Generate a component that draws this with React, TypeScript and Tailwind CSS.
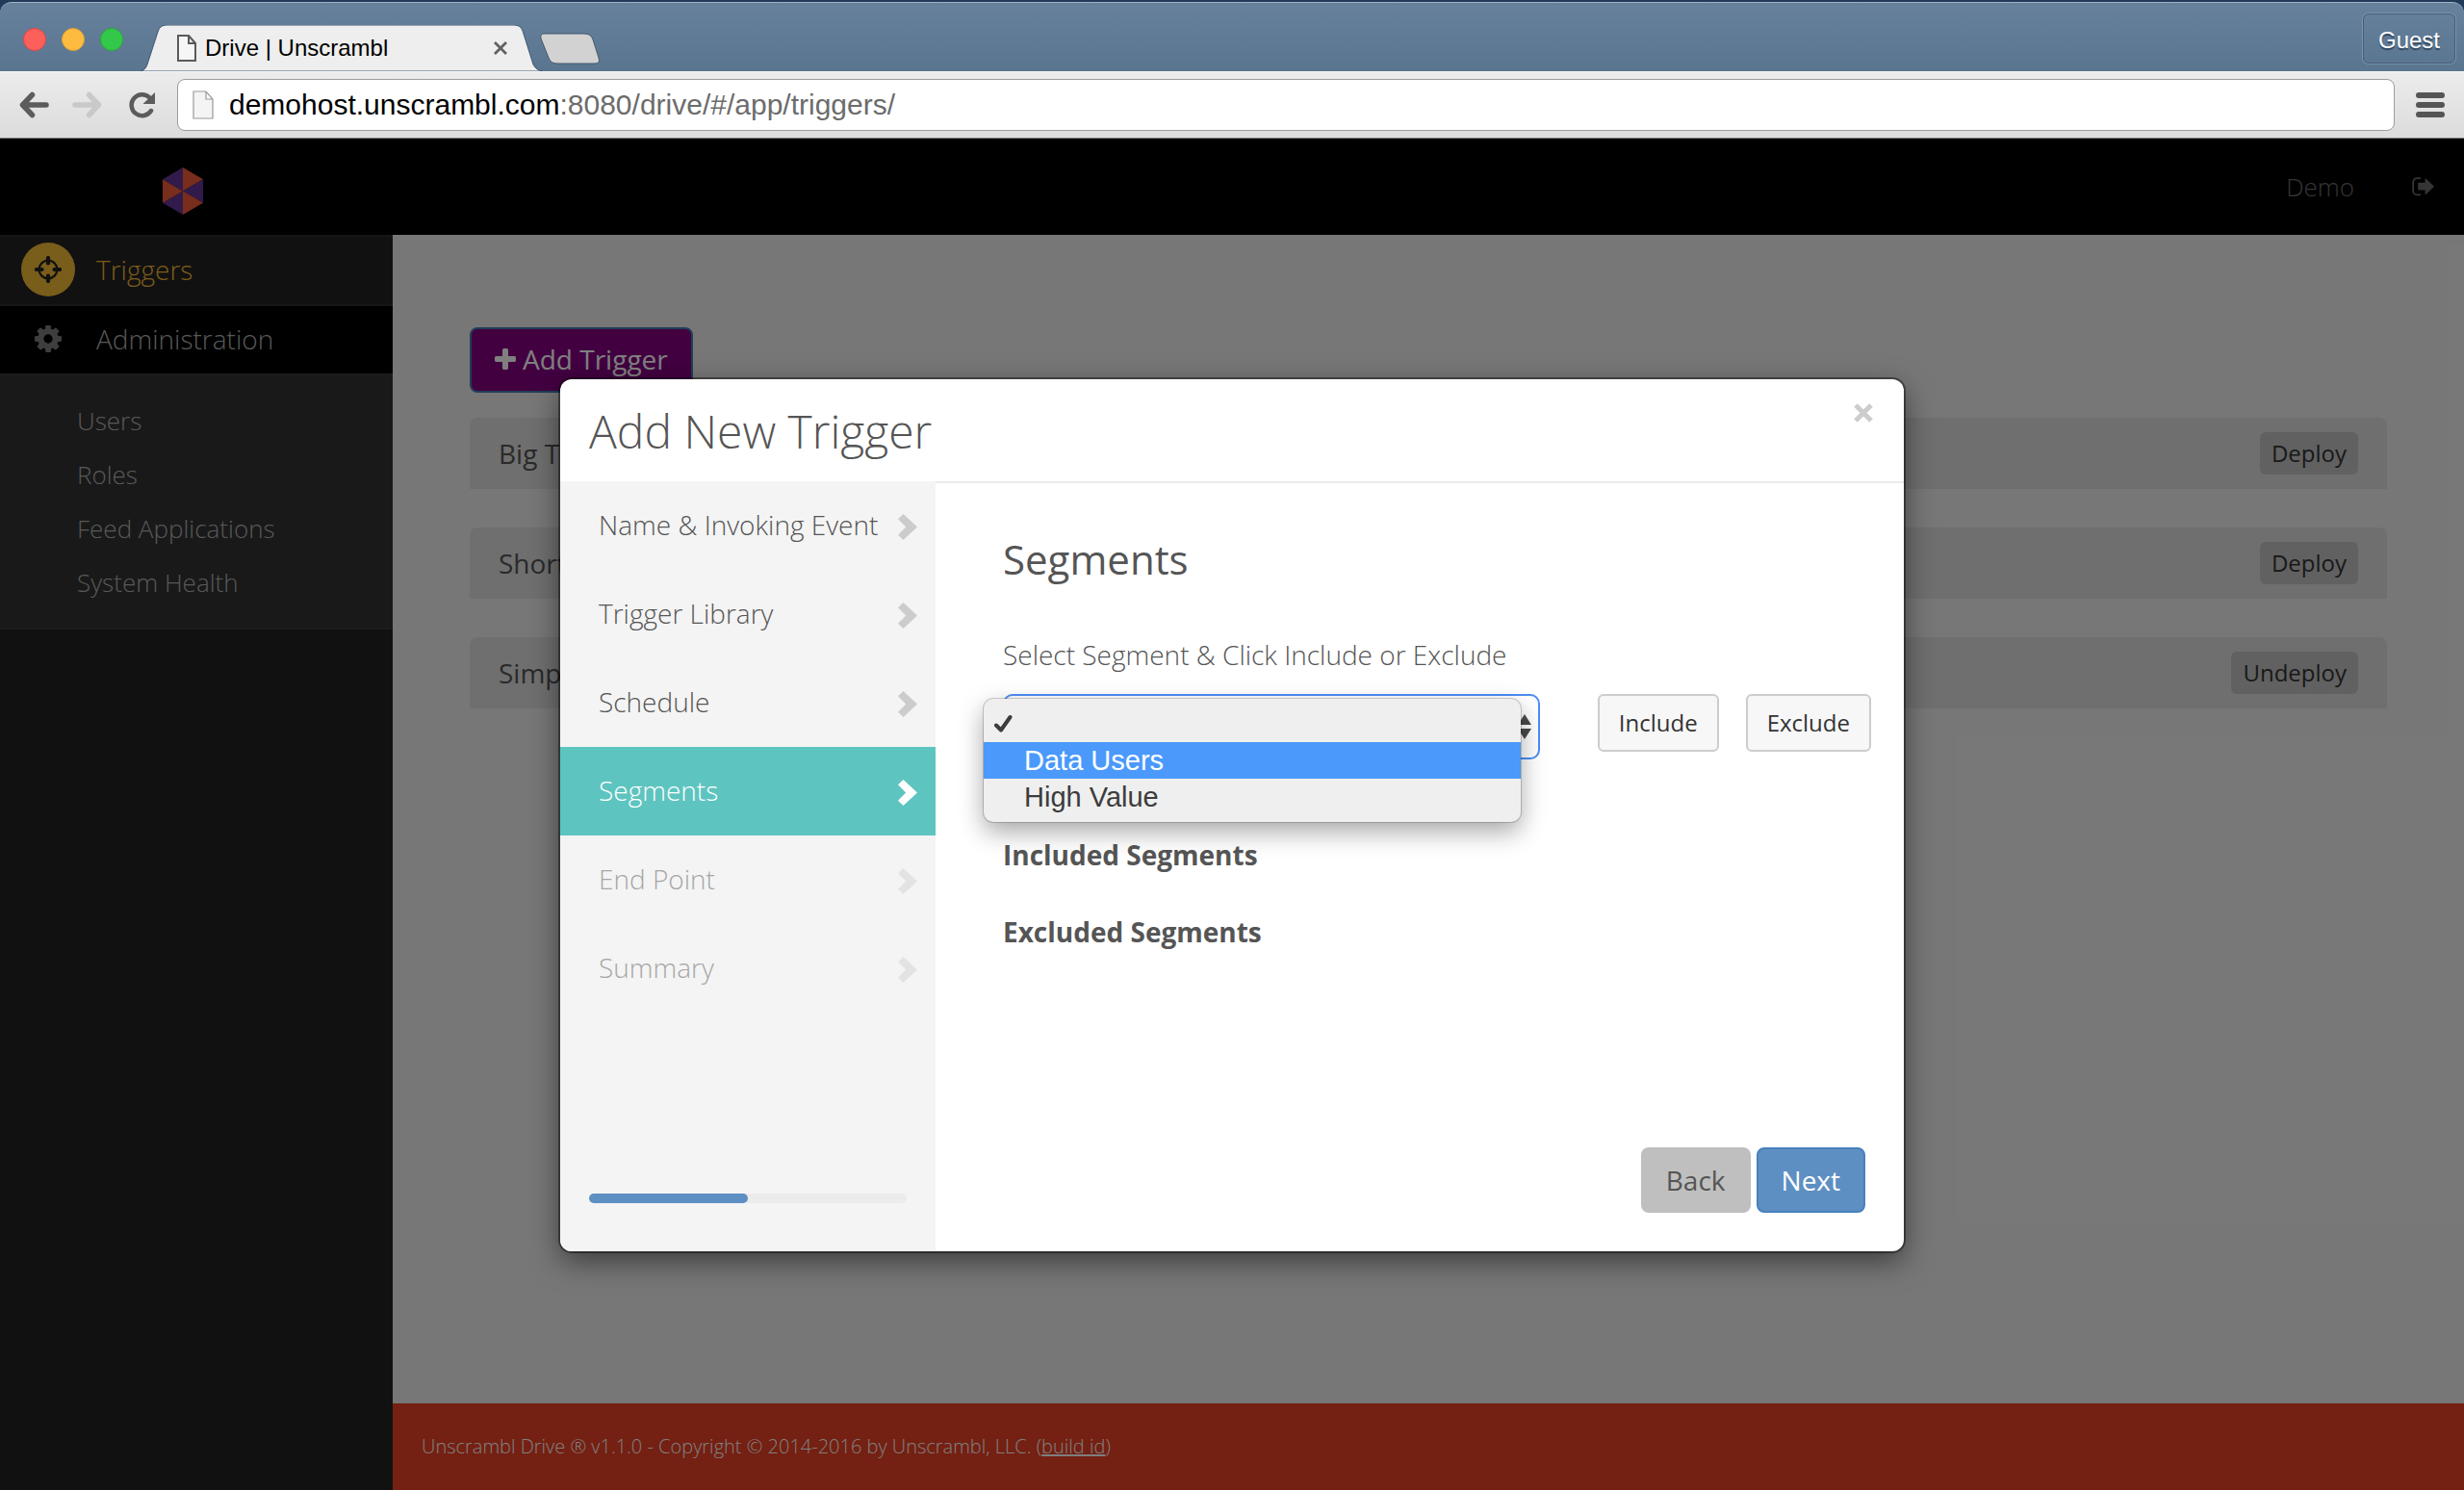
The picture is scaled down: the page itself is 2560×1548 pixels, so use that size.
import { useState } from 'react';
import clsx from 'clsx';

const steps = [
  { label: 'Name & Invoking Event', state: 'done' },
  { label: 'Trigger Library', state: 'done' },
  { label: 'Schedule', state: 'done' },
  { label: 'Segments', state: 'active' },
  { label: 'End Point', state: 'disabled' },
  { label: 'Summary', state: 'disabled' },
];

const triggers = [
  { name: 'Big T', action: 'Deploy' },
  { name: 'Short', action: 'Deploy' },
  { name: 'Simple', action: 'Undeploy' },
];

const adminLinks = ['Users', 'Roles', 'Feed Applications', 'System Health'];
const segmentOptions = ['', 'Data Users', 'High Value'];

const PlusIcon = () => (
  <svg viewBox="192 192 1408 1408" className="w-[22px] h-[22px]" fill="currentColor">
    <path d="M1600 800v192q0 40-28 68t-68 28h-416v416q0 40-28 68t-68 28h-192q-40 0-68-28t-28-68v-416h-416q-40 0-68-28t-28-68v-192q0-40 28-68t68-28h416v-416q0-40 28-68t68-28h192q40 0 68 28t28 68v416h416q40 0 68 28t28 68z" />
  </svg>
);

const CogIcon = () => (
  <svg viewBox="128 128 1536 1536" className="w-7 h-7" fill="currentColor">
    <path d="M1152 896q0-106-75-181t-181-75-181 75-75 181 75 181 181 75 181-75 75-181zm512-109v222q0 12-8 23t-20 13l-185 28q-19 54-39 91 35 50 107 138 10 12 10 25t-9 23q-27 37-99 108t-94 71q-12 0-26-9l-138-108q-44 23-91 38-16 136-29 186-7 28-36 28h-222q-14 0-24.5-8.5t-11.5-21.5l-28-184q-49-16-90-37l-141 107q-10 9-25 9-14 0-25-11-126-114-165-168-7-10-7-23 0-12 8-23 15-21 51-66.5t54-70.5q-27-50-41-99l-183-27q-13-2-21-12.5t-8-23.5v-222q0-12 8-23t19-13l186-28q14-46 39-92-40-57-107-138-10-12-10-24 0-10 9-23 26-36 98.5-107.5t94.5-71.5q13 0 26 10l138 107q44-23 91-38 16-136 29-186 7-28 36-28h222q14 0 24.5 8.5t11.5 21.5l28 184q49 16 90 37l142-107q9-9 24-9 13 0 25 10 129 119 165 170 7 8 7 22 0 12-8 23-15 21-51 66.5t-54 70.5q26 50 41 98l183 28q13 2 21 12.5t8 23.5z" />
  </svg>
);

const CrosshairIcon = () => (
  <svg viewBox="0 0 28 28" className="w-7 h-7" fill="none" stroke="currentColor">
    <circle cx="14" cy="14" r="9.4" strokeWidth="2.2" />
    <path d="M14 2v5.500M14 20.500v5.500M2 14h5.500M20.500 14h5.500" strokeWidth="4.200" strokeLinecap="round" />
  </svg>
);

const SignOutIcon = () => (
  <svg viewBox="0 0 24 20" className="w-6 h-5">
    <path d="M9 1.200H5a3.800 3.800 0 0 0-3.800 3.800v9.500A3.800 3.800 0 0 0 5 18.300h4" fill="none" stroke="currentColor" strokeWidth="1.800" />
    <path d="M23 9.800 14.400 18q-.8.5-.8-.4v-4H7q-.8 0-.8-.8V6.600q0-.8.8-.8h6.600v-4q0-1 .8-.4z" fill="currentColor" />
  </svg>
);

const Logo = () => (
  <svg viewBox="0 0 42 49" className="w-[42px] h-[49px]">
    <path d="M21 24.500V0l21 12.200z" fill="#f25b3a" />
    <path d="M21 24.500 42 12.200v24.500z" fill="#643796" />
    <path d="m21 24.500 21 12.200L21 49z" fill="#f25b3a" />
    <path d="M21 24.500V49L0 36.700z" fill="#643796" />
    <path d="M21 24.500 0 36.700V12.200z" fill="#f25b3a" />
    <path d="M21 24.500 0 12.200 21 0z" fill="#643796" />
  </svg>
);

const Chevron = () => (
  <svg viewBox="0 0 20 27" className="w-5 h-[27px]" fill="currentColor">
    <path d="M5.500 0 0 5.300l8.200 8.200L0 21.700 5.500 27 20 13.500z" />
  </svg>
);

const BrowserChrome = () => (
  <div className="bg-[#22395a] pt-[2px] font-['Liberation_Sans',Arial,sans-serif]">
    <div className="flex h-[72px] rounded-t-xl border-t border-[#9fb2c6] bg-linear-to-b from-[#67819c] to-[#5a7590]">
      <div className="flex items-center gap-4 pl-6 pb-1 pt-2">
        <span className="w-6 h-6 rounded-full bg-[#fc605b] border border-[#df4744]" />
        <span className="w-6 h-6 rounded-full bg-[#fdbc40] border border-[#de9f34]" />
        <span className="w-6 h-6 rounded-full bg-[#34c84a] border border-[#27aa35]" />
      </div>
      <div className="relative ml-[18px] mt-auto h-12 w-[418px]">
        <svg viewBox="0 0 418 48" className="absolute inset-0 w-full h-full">
          <path d="M0 48q5-1 7-7L18 7q2-7 9-7h361q7 0 9 6l11 35q3 6 10 7z" fill="#eeeeee" stroke="#3f5871" strokeWidth="1" />
        </svg>
        <div className="relative flex h-full items-center pl-[38px] pr-[37px]">
          <svg viewBox="0 0 20 28" className="w-5 h-7" fill="#f6f6f6" stroke="#5a5a5a" strokeWidth="2">
            <path d="M1 1h11l7 8v18H1zM12 1v8h7" />
          </svg>
          <span className="ml-[9px] text-[24px] leading-7 text-black whitespace-nowrap">Drive | Unscrambl</span>
          <button aria-label="Close tab" className="ml-auto">
            <svg viewBox="0 0 14 14" className="w-[14px] h-[14px]" stroke="#606060" strokeWidth="2.800">
              <path d="m1 1 12 12M13 1 1 13" />
            </svg>
          </button>
        </div>
      </div>
      <button aria-label="New tab" className="-ml-1 self-start mt-[31px]">
        <svg viewBox="0 0 64 34" className="w-16 h-[34px]">
          <path d="M5 1h42q7 0 9 6l6 19q2 6-4 6H19q-7 0-9-6L2 6q-1-5 3-5z" fill="#d2d2d2" stroke="#42596f" />
        </svg>
      </button>
      <button className="ml-auto mr-[9px] mt-[11px] h-[52px] w-24 rounded-md border border-[#465d76] pt-1 text-[24px] text-white shadow-[0_0_0_1px_#7c93ab] text-shadow-[0_2px_1px_#2f455c]">
        Guest
      </button>
    </div>
    <div className="flex h-[70px] items-center border-t border-b border-t-[#f6f6f6] border-b-[#7a7a7a] bg-linear-to-b from-[#ececec] to-[#dcdcdc] pl-5 pr-5">
      <button aria-label="Back">
        <svg viewBox="0 0 32 28" className="w-8 h-7" fill="none" stroke="#5c5c5c" strokeWidth="5.500" strokeLinecap="round">
          <path d="M4 14h24M13.500 3.500 3.500 14l10 10.500" strokeLinejoin="round" />
        </svg>
      </button>
      <button aria-label="Forward" className="ml-[22px]">
        <svg viewBox="0 0 32 28" className="w-8 h-7" fill="none" stroke="#c9c9c9" strokeWidth="5.500" strokeLinecap="round">
          <path d="M4 14h24M18.500 3.500l10 10.500-10 10.500" strokeLinejoin="round" />
        </svg>
      </button>
      <button aria-label="Reload" className="ml-7">
        <svg viewBox="0 0 28 28" className="w-7 h-7">
          <path d="M21.500 6.500A11 11 0 1 0 23 20" fill="none" stroke="#5c5c5c" strokeWidth="4.500" strokeLinecap="round" />
          <path d="M27 1v12H14.500z" fill="#5c5c5c" />
        </svg>
      </button>
      <div className="ml-[22px] flex h-[54px] flex-1 items-center rounded-lg border border-[#9c9c9c] bg-white pl-[15px]">
        <svg viewBox="0 0 22 30" className="w-[22px] h-[30px]" fill="#f4f4f4" stroke="#9a9a9a" strokeWidth="1.200">
          <path d="M1 1h13l7 8v20H1zM14 1v8h7" />
        </svg>
        <p className="ml-4 text-[30px] leading-8 text-[#6c6c6c]">
          <span className="text-black">demohost.unscrambl.com</span>:8080/drive/#/app/triggers/
        </p>
      </div>
      <button aria-label="Menu" className="ml-[22px] flex w-[30px] flex-col gap-1">
        <span className="h-[6px] rounded-full bg-[#555]" />
        <span className="h-[6px] rounded-full bg-[#555]" />
        <span className="h-[6px] rounded-full bg-[#555]" />
      </button>
    </div>
  </div>
);

const Sidebar = () => (
  <nav className="w-[408px] shrink-0 bg-[#222] text-[28px] font-light">
    <a href="#triggers" className="flex h-[74px] items-center border-y-2 border-[#2d2d2d] pb-[2px] pl-[22px] text-[#f2ba34]">
      <span className="flex h-14 w-14 items-center justify-center rounded-full bg-[#f2ba34] text-[#222]">
        <CrosshairIcon />
      </span>
      <span className="ml-[22px]">Triggers</span>
    </a>
    <a href="#administration" className="flex h-[70px] items-center bg-black pb-[2px] pl-9 text-[#b0b0b0]">
      <span className="text-[#7c7c7c]"><CogIcon /></span>
      <span className="ml-9">Administration</span>
    </a>
    <ul className="border-y-2 border-[#363636] bg-[#323232] py-[19px] pl-20 text-[26px] text-[#b0b0b0]">
      {adminLinks.map((link) => (
        <li key={link}>
          <a href="#admin" className="block leading-[56px]">{link}</a>
        </li>
      ))}
    </ul>
  </nav>
);

const SegmentSelect = () => {
  const [value, setValue] = useState('');
  const [highlighted, setHighlighted] = useState('Data Users');

  return (
    <div className="relative flex-1">
      <select
        id="segment"
        value={value}
        onChange={(e) => setValue(e.target.value)}
        className="block h-[68px] w-full appearance-none rounded-[10px] border-2 border-[#4d8df6] bg-white px-4 text-[28px] outline-none"
      >
        {segmentOptions.map((option) => (
          <option key={option} value={option}>{option}</option>
        ))}
      </select>
      <svg viewBox="0 0 14 26" className="pointer-events-none absolute right-[9px] top-[21px] h-[26px] w-[14px]" fill="#4a4a4a">
        <path d="M7 0l7 11H0zM7 26l7-11H0z" />
      </svg>
      <ul
        role="listbox"
        aria-label="Segment options"
        className="absolute -left-5 right-5 top-[5px] rounded-[10px] bg-[#efefef] py-[7px] font-['Liberation_Sans',Arial,sans-serif] text-[29px] leading-[38px] text-[#3c3c3c] shadow-[0_0_0_1px_rgba(0,0,0,0.18),0_10px_26px_rgba(0,0,0,0.35)]"
      >
        {segmentOptions.map((option) => (
          <li
            key={option}
            role="option"
            aria-selected={option === value}
            onMouseEnter={() => setHighlighted(option)}
            onClick={() => setValue(option)}
            className={clsx('flex h-[38px] items-center pl-[10px]', option === highlighted && 'bg-[#4a99fb] text-white')}
          >
            <span className="w-8">
              {option === value && (
                <svg viewBox="0 0 20 20" className="h-5 w-5" fill="none" stroke="currentColor" strokeWidth="4" strokeLinecap="round" strokeLinejoin="round">
                  <path d="M3 11.500l5 5L17.500 3" />
                </svg>
              )}
            </span>
            {option}
          </li>
        ))}
      </ul>
    </div>
  );
};

const AddTriggerModal = () => (
  <div
    role="dialog"
    aria-labelledby="modal-title"
    className="mt-[250px] w-full max-w-[1396px] overflow-hidden rounded-xl bg-white text-[#555] shadow-[0_0_0_2px_rgba(0,0,0,0.4),0_10px_30px_rgba(0,0,0,0.5)]"
  >
    <div className="flex h-[106px] items-center justify-between pl-[30px] pr-8 pt-[2px]">
      <h2 id="modal-title" className="text-[48px] font-light">Add New Trigger</h2>
      <button aria-label="Close" className="mt-[23px] self-start text-[#ccc]">
        <svg viewBox="0 0 20 20" className="h-5 w-5" stroke="currentColor" strokeWidth="5">
          <path d="m2 2 16 16M18 2 2 18" />
        </svg>
      </button>
    </div>
    <div className="flex min-h-[800px]">
      <div className="flex w-[390px] shrink-0 flex-col bg-[#f4f4f4]">
        <ol>
          {steps.map((step) => (
            <li key={step.label}>
              <button
                disabled={step.state === 'disabled'}
                className={clsx(
                  'flex h-[92px] w-full items-center justify-between pb-[2px] pl-10 pr-[19px] text-[28px] font-light whitespace-nowrap',
                  step.state === 'active' && 'bg-[#5ec4bf] text-white',
                  step.state === 'disabled' && 'text-[#a6a6a6]'
                )}
              >
                {step.label}
                <span
                  className={clsx(
                    'pt-1',
                    step.state === 'done' && 'text-[#ccc]',
                    step.state === 'disabled' && 'text-[#e3e3e3]'
                  )}
                >
                  <Chevron />
                </span>
              </button>
            </li>
          ))}
        </ol>
        <div role="progressbar" aria-valuenow={50} aria-label="Progress" className="mx-[30px] mb-[50px] mt-auto h-[10px] rounded-full bg-[#ececec]">
          <div className="h-full w-1/2 rounded-full bg-[#5e8fc3]" />
        </div>
      </div>
      <div className="flex flex-1 flex-col border-t-2 border-[#ececec] pb-10 pl-[70px] pr-[34px] pt-[51px]">
        <h3 className="text-[42px] leading-[56px]">Segments</h3>
        <label htmlFor="segment" className="mt-[51px] text-[28px] font-light leading-10">
          Select Segment & Click Include or Exclude
        </label>
        <div className="mt-[21px] flex items-start">
          <SegmentSelect />
          <button className="ml-[60px] h-[60px] rounded-md border-2 border-[#ccc] bg-[#f7f7f7] px-5 text-[24px] text-[#333]">Include</button>
          <button className="ml-7 h-[60px] rounded-md border-2 border-[#ccc] bg-[#f7f7f7] px-5 text-[24px] text-[#333]">Exclude</button>
        </div>
        <h4 className="mt-[79px] text-[28px] font-bold leading-10">Included Segments</h4>
        <h4 className="mt-10 text-[28px] font-bold leading-10">Excluded Segments</h4>
        <div className="mr-[6px] mt-auto flex justify-end gap-[6px]">
          <button className="h-[68px] rounded-lg bg-[#bfbfbf] px-[26px] text-[28px] text-[#555]">Back</button>
          <button className="h-[68px] rounded-lg border-2 border-[#4881be] bg-[#5e8fc3] px-6 text-[28px] font-medium text-white">Next</button>
        </div>
      </div>
    </div>
  </div>
);

const App = () => (
  <div className="flex min-h-screen flex-col font-['Open_Sans',sans-serif]">
    <BrowserChrome />
    <div className="relative flex flex-1 flex-col">
      <header className="flex h-[100px] items-center bg-black pl-[169px] pr-[30px] text-[#6a6a6a]">
        <div className="pt-2">
          <Logo />
        </div>
        <a href="#account" className="ml-auto text-[26px] font-light">Demo</a>
        <a href="#logout" aria-label="Sign out" className="ml-[60px]"><SignOutIcon /></a>
      </header>
      <div className="flex flex-1">
        <Sidebar />
        <div className="flex flex-1 flex-col bg-[#efefef]">
          <main className="flex-1 pl-20 pr-20 pt-24">
            <button className="flex h-[68px] items-center gap-[7px] rounded-lg border-2 border-[#407cae] bg-[#850083] px-6 pb-[2px] text-[28px] font-medium text-white">
              <PlusIcon />
              Add Trigger
            </button>
            <ul className="mt-[26px] flex flex-col gap-10">
              {triggers.map((trigger) => (
                <li key={trigger.name} className="flex h-[74px] items-center justify-between rounded-t-lg bg-[#dedede] px-[30px] text-[28px] text-[#555]">
                  {trigger.name}
                  <button className="h-11 rounded-md bg-[#c2c2c2] px-3 text-[24px] text-[#333]">{trigger.action}</button>
                </li>
              ))}
            </ul>
          </main>
          <footer className="flex h-[90px] items-center bg-[#e84024] pl-[30px] text-[20px] font-light text-white">
            <p>
              Unscrambl Drive ® v1.1.0 - Copyright © 2014-2016 by Unscrambl, LLC. (<a href="#build" className="underline">build id</a>)
            </p>
          </footer>
        </div>
      </div>
      <div className="absolute inset-0 flex items-start justify-center bg-black/50">
        <AddTriggerModal />
      </div>
    </div>
  </div>
);

export default App;
